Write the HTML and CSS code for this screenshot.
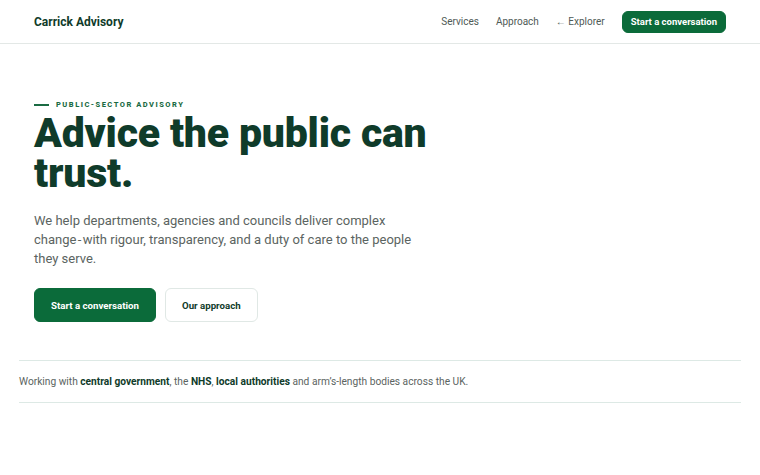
FILE: index.html
```html
<!DOCTYPE html>
<html lang="en-GB">

<head>
    <meta charset="UTF-8">
    <meta name="viewport" content="width=device-width, initial-scale=1.0">
    <title>Carrick Advisory</title>
    <link rel="stylesheet" href="styles.css">
</head>

<body>
    <header class="topbar">
        <a class="brand" href="#">Carrick Advisory</a>
        <nav class="nav">
            <a href="#services">Services</a>
            <a href="#approach">Approach</a>
            <a href="#explorer">&larr; Explorer</a>
            <a class="btn btn-small" href="#contact">Start a conversation</a>
        </nav>
    </header>

    <main class="page">
        <section class="hero">
            <p class="eyebrow">Public-sector advisory</p>
            <h1>Advice the public can trust.</h1>
            <p class="lead">We help departments, agencies and councils deliver complex change&#8202;-&#8202;with rigour, transparency, and a duty of care to the people they serve.</p>
            <div class="actions">
                <a class="btn" href="#contact">Start a conversation</a>
                <a class="btn btn-ghost" href="#approach">Our approach</a>
            </div>
        </section>

        <section class="clients">
            <p>Working with <strong>central government</strong>, the <strong>NHS</strong>, <strong>local authorities</strong> and arm’s-length bodies across the UK.</p>
        </section>
    </main>
</body>

</html>
```

FILE: styles.css
```css
body {
    font-family: Roboto, "Liberation Sans", sans-serif;
    color: #0f3b2a;
    background-color: #fff;
    margin: 0;
}

a {
    text-decoration: none;
    color: inherit;
}

.topbar {
    display: flex;
    align-items: center;
    justify-content: space-between;
    height: 44px;
    padding: 0 34px;
    border-bottom: 1px solid #e3e8e6;
    box-sizing: border-box;
}

.brand {
    font-size: 12px;
    font-weight: 700;
    color: #0f3b2a;
}

.nav {
    display: flex;
    align-items: center;
    gap: 17px;
    font-size: 10px;
    color: #4f5a56;
}

.btn {
    display: inline-flex;
    align-items: center;
    justify-content: center;
    background-color: #0b6b3a;
    color: #fff;
    font-weight: 700;
    font-size: 9.7px;
    height: 34px;
    padding: 0 16px;
    border: 1px solid #0b6b3a;
    border-radius: 6px;
    box-sizing: border-box;
}

.btn-small {
    height: 22px;
    padding: 0 8px;
    font-size: 9.5px;
    color: #fff;
}

.btn-ghost {
    background-color: #fff;
    border-color: #e0e8e5;
    color: #0f3b2a;
}

.page {
    padding: 0 19px;
}

.hero {
    padding: 56px 15px 38px;
}

.eyebrow {
    display: flex;
    align-items: center;
    gap: 7px;
    margin: 0;
    font-size: 7.5px;
    line-height: 10px;
    font-weight: 800;
    letter-spacing: 1.5px;
    text-transform: uppercase;
    color: #1a6b43;
}

.eyebrow::before {
    content: "";
    width: 15px;
    height: 1.5px;
    background-color: #1a6b43;
}

h1 {
    margin: 3px 0 0;
    font-size: 41px;
    line-height: 40px;
    font-weight: 900;
    letter-spacing: -0.2px;
    color: #0f3b2a;
    max-width: 420px;
}

.lead {
    margin: 18px 0 0;
    max-width: 378px;
    font-size: 13px;
    line-height: 19px;
    color: #5b6461;
}

.actions {
    display: flex;
    gap: 9px;
    margin-top: 20px;
}

.clients {
    border-top: 1px solid #dde9e5;
    border-bottom: 1px solid #dde9e5;
    padding: 14px 0 13px;
}

.clients p {
    margin: 0;
    font-size: 10.2px;
    line-height: 14px;
    color: #5b6461;
}

.clients strong {
    color: #0f3b2a;
}
```
